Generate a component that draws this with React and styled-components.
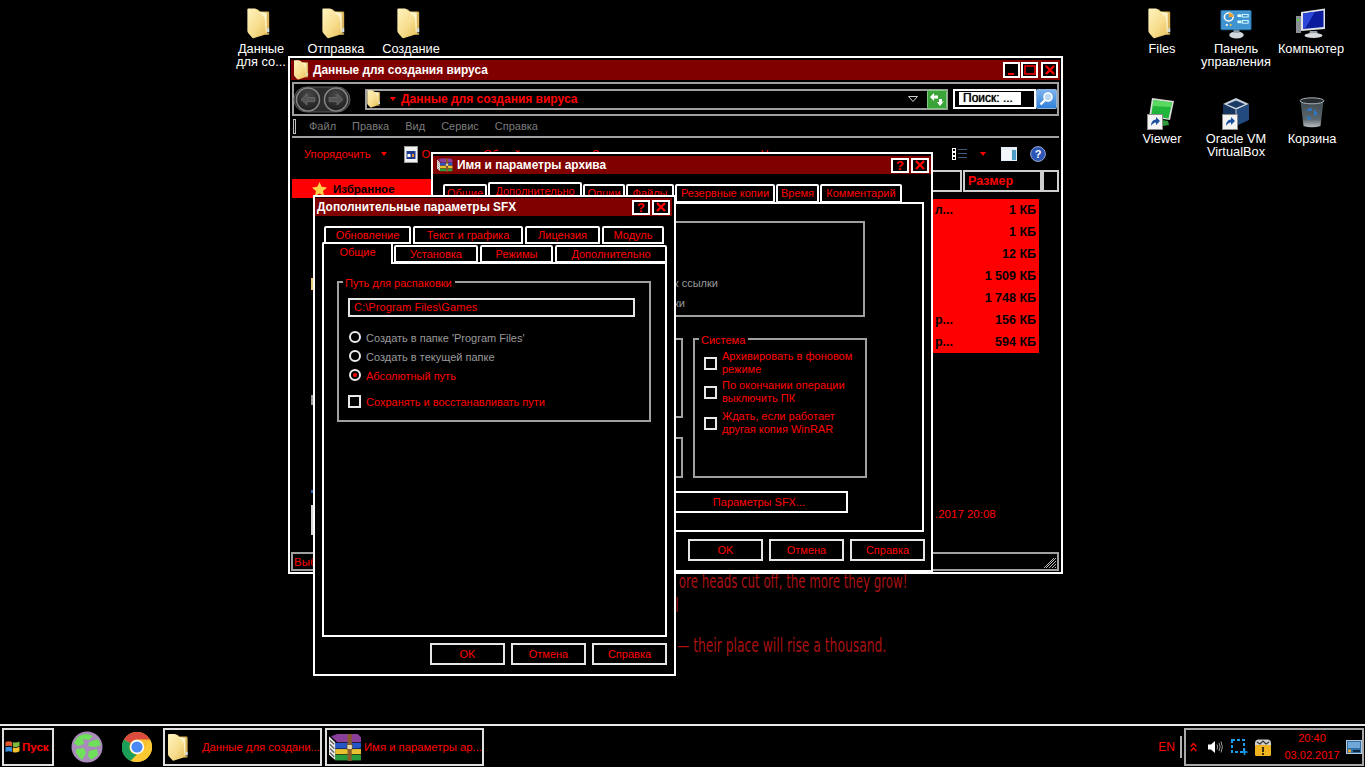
import React, { useId } from "react";
import styled, { createGlobalStyle } from "styled-components";

const Global = createGlobalStyle`
  html, body { margin: 0; padding: 0; background: #000; overflow: hidden; }
  * { box-sizing: border-box; }
  #root { width: 1365px; height: 767px; }
`;

const UI = `"Liberation Sans", Arial, sans-serif`;
const RED = "#ff0000";
const LINE = "#a0a0a0";

const Screen = styled.div`
  width: 1365px; height: 767px; background: #000; display: flex; flex-direction: column;
  font-family: ${UI}; font-size: 11px; color: ${RED}; overflow: hidden;
`;
const Desktop = styled.main`position: relative; flex: 1;`;

/* wallpaper */
const WallText = styled.div`
  position: absolute; right: ${p => p.$right}px; top: ${p => p.$top}px; white-space: nowrap;
  font-family: "DejaVu Sans", sans-serif; font-size: 20px; color: #a81212;
  transform: scaleX(${p => p.$sx}); transform-origin: right center;
`;

/* desktop icons */
const Shortcut = styled.button`
  position: absolute; left: ${p => p.$x}px; top: ${p => p.$y}px; width: 76px; padding: 0; border: 0; background: none;
  display: flex; flex-direction: column; align-items: center; font-family: ${UI};
`;
const IconSlot = styled.div`height: 33px; padding-right: ${p => p.$pr || 0}px; display: flex; align-items: flex-start; justify-content: center;`;
const ShortcutLabel = styled.span`
  margin-top: ${p => p.$gap || 0}px; color: #fff; font-size: 12.8px; line-height: 13px; text-align: center; white-space: pre-line;
`;

/* windows */
const Win = styled.section`
  position: absolute; left: ${p => p.$x}px; top: ${p => p.$y}px; width: ${p => p.$w}px; height: ${p => p.$h}px; isolation: isolate;
  border: 2px solid #fff; background: #000; display: flex; flex-direction: column; padding: ${p => p.$pad};
`;
const TitleBar = styled.header`
  flex: none; height: ${p => p.$h}px; background: #800000; display: flex; align-items: center;
  margin-right: ${p => p.$mr || 0}px; padding: 0 ${p => p.$pr || 2}px 0 ${p => p.$pl || 2}px;
`;
const TitleText = styled.span`
  flex: 1; color: #fff; font-weight: 700; font-size: 11.9px; white-space: nowrap; margin-left: ${p => p.$ml || 0}px;
`;
const CapBtn = styled.span`
  flex: none; width: ${p => p.$w || 18}px; height: ${p => p.$h || 16}px; margin-left: ${p => p.$ml ?? 2}px; border: 2px solid #fff; background: #000; color: ${RED};
  display: flex; align-items: center; justify-content: center; font-weight: 700; font-size: 13px; line-height: 1;
`;

/* explorer */
const AddressBar = styled.div`
  flex: none; height: 34px; margin: 2px 1px 0; border: 2px solid ${LINE}; display: flex; align-items: center;
`;
const NavSlot = styled.span`display: flex; flex: none; margin-left: -1px;`;
const AddressBox = styled.div`
  width: 583px; height: 21px; margin-left: 14px; border: 2px solid ${LINE}; border-right-width: 1px; display: flex; align-items: center;
`;
const Crumb = styled.span`color: ${RED}; font-weight: 700; font-size: 12px; margin-left: 5px; flex: 1; white-space: nowrap;`;
const SearchBox = styled.div`
  width: 83px; height: 20px; margin-left: 5px; border: 2px solid #fff; padding: 1px 0 1px 4px; display: flex;
`;
const SearchHint = styled.span`
  width: 62px; height: 13px; background: #fff; color: #000; font-size: 12px; line-height: 13px; padding-left: 4px; white-space: nowrap; text-shadow: 0 0 1px #000;
`;
const MenuBar = styled.nav`
  flex: none; height: 22px; margin: 0 1px; border-bottom: 2px solid ${LINE}; display: flex; align-items: center; gap: 16px;
`;
const Grip = styled.span`width: 3px; height: 15px; margin-right: -3px; margin-left: 1px; border: 1px solid #c0c0c0;`;
const MenuItem = styled.span`color: #7c7c7c; font-size: 11px; &:first-of-type { margin-left: 12px; }`;
const Toolbar = styled.div`flex: none; height: 32px; display: flex; align-items: center; padding-left: 13px; white-space: nowrap;`;
const ToolText = styled.span`color: ${RED}; font-size: 11.2px; margin-left: ${p => p.$ml || 0}px; width: ${p => p.$w ? p.$w + "px" : "auto"};`;
const Caret = styled.i`
  display: block; flex: none; width: 0; height: 0; margin-left: ${p => p.$ml || 0}px; border: 3.5px solid transparent; border-top: 4px solid ${RED}; border-bottom: 0;
`;
const ToolIcon = styled.span`display: flex; flex: none; margin-left: ${p => p.$ml || 0}px;`;
const Body = styled.div`flex: 1; display: flex; min-height: 0;`;
const Sidebar = styled.aside`width: 140px; flex: none; padding: 9px 0 0 1px; position: relative;`;
const FavRow = styled.div`
  height: 19px; background: ${RED}; color: #000; font-weight: 700; font-size: 11.5px; display: flex; align-items: center; padding-left: 20px; gap: 6px;
`;
const Sliver = styled.i`
  position: absolute; left: ${p => p.$x}px; top: ${p => p.$y}px; width: 3px; height: ${p => p.$h}px; background: ${p => p.$c};
`;
const FileMain = styled.div`flex: 1; display: flex; flex-direction: column; padding-right: 1px; min-width: 0;`;
const HeaderRow = styled.div`flex: none; height: 22px; display: flex; gap: 1px;`;
const HeadCell = styled.div`
  flex: ${p => p.$w ? "none" : 1}; width: ${p => p.$w ? p.$w + "px" : "auto"}; border: 2px solid #cfcfcf; color: ${RED}; font-weight: 700; font-size: 12.5px;
  display: flex; align-items: center; padding-left: 3px; margin-left: ${p => p.$ml || 0}px;
`;
const RowsBlock = styled.div`margin-top: 7px; width: 608px; height: 154px; background: ${RED};`;
const FileRow = styled.div`
  height: 22px; display: flex; align-items: center; color: #000; font-weight: 700; font-size: 12.5px; white-space: nowrap;
`;
const FileName = styled.span`flex: 1; text-align: right; padding-right: 14px;`;
const FileSize = styled.span`width: 72px; text-align: right; padding-right: 3px; flex: none;`;
const DateText = styled.div`margin: 154px 0 0 504px; color: ${RED}; font-size: 11.5px; line-height: 14px;`;
const StatusBar = styled.footer`
  flex: none; height: 19px; margin-right: 1px; border: 2px solid ${LINE}; color: ${RED}; font-size: 11.5px; display: flex; align-items: center; justify-content: space-between; padding-left: 1px;
`;

/* dialogs */
const TabRow = styled.div`
  flex: none; display: flex; align-items: flex-end; gap: ${p => p.$gap ?? 1}px; height: ${p => p.$h}px; margin: ${p => p.$m}; position: relative; z-index: ${p => p.$z || 0};
`;
const Tab = styled.div`
  flex: none; width: ${p => p.$w}px; height: ${p => p.$h || 19}px; border: 2px solid #fff; border-bottom: ${p => p.$active ? "0" : "2px solid #fff"}; border-radius: 2px 2px 0 0;
  background: #000; color: ${RED}; font-size: 11px; line-height: ${p => p.$active ? 16 : 15}px; text-align: center; white-space: nowrap; overflow: hidden;
  margin-right: ${p => p.$mr || 0}px; margin-bottom: ${p => p.$active ? -1 : 0}px; position: relative; z-index: ${p => p.$active ? 2 : 0};
`;
const TabPanel = styled.div`
  flex: none; width: ${p => p.$w}px; height: ${p => p.$h}px; margin: ${p => p.$m}; border: 2px solid #fff; background: #000; padding: ${p => p.$pad};
  display: flex; flex-direction: column; align-items: flex-start;
`;
const Group = styled.div`
  position: relative; flex: none; width: ${p => p.$w}px; height: ${p => p.$h}px; margin-top: ${p => p.$mt || 0}px; border: 2px solid ${LINE}; padding: ${p => p.$pad || 0};
`;
const Legend = styled.span`
  position: absolute; left: 4px; top: -6px; background: #000; padding: 0 3px 0 2px; font-size: 11px; line-height: 13px; color: ${RED}; white-space: nowrap;
`;
const GreyLine = styled.div`
  width: ${p => p.$w}px; margin-top: ${p => p.$mt}px; height: 13px; line-height: 13px; text-align: right; color: #9a9a9a; font-size: 11px; white-space: nowrap; overflow: hidden; direction: rtl;
`;
const GroupsRow = styled.div`display: flex; margin-top: 21px; gap: 10px; align-items: flex-start;`;
const GroupsCol = styled.div`display: flex; flex-direction: column; gap: 19px;`;
const CheckBox = styled.i`display: block; flex: none; width: 13px; height: 13px; border: 2px solid #e8e8e8; background: #000;`;
const WrapCheck = styled.label`
  display: flex; align-items: center; gap: 5px; margin-top: ${p => p.$mt || 0}px; font-size: 11px; line-height: 13px; color: ${RED};
`;
const WideButton = styled.div`
  align-self: flex-end; width: 176px; height: 22px; margin: 13px 74px 0 0; border: 2px solid #fff; display: flex; align-items: center; justify-content: center; font-size: 11px; color: ${RED}; padding-right: 2px; white-space: nowrap;
`;
const ButtonRow = styled.div`
  flex: none; display: flex; justify-content: flex-end; gap: ${p => p.$gap}px; margin: ${p => p.$m}; 
`;
const DlgButton = styled.div`
  width: 75px; height: 22px; border: 2px solid #e6e6e6; color: ${RED}; font-size: 11px; display: flex; align-items: center; justify-content: center;
`;
const PathInput = styled.div`
  width: 287px; height: 19px; border: 2px solid #e6e6e6; color: ${RED}; font-size: 11px; line-height: 15px; padding-left: 4px; letter-spacing: 0.1px;
`;
const RadioRow = styled.label`
  height: 19px; display: flex; align-items: center; gap: 5px; padding-left: 1px; font-size: 11px; color: ${p => p.$on ? RED : "#9a9a9a"}; margin-top: ${p => p.$mt || 0}px; white-space: nowrap;
`;
const Radio = styled.i`
  display: flex; align-items: center; justify-content: center; flex: none; width: 12px; height: 12px; margin-top: -2px; border-radius: 50%; border: 2px solid #ececec; background: #000;
  &::after { content: ""; width: 4px; height: 4px; border-radius: 50%; background: ${p => p.$on ? RED : "transparent"}; }
`;
const CheckRow = styled.label`
  height: 19px; display: flex; align-items: center; gap: 5px; margin-top: ${p => p.$mt || 0}px; font-size: 11px; color: ${RED}; white-space: nowrap;
`;

/* taskbar */
const Taskbar = styled.footer`
  flex: none; height: 43px; border-top: 2px solid #e8e8e8; display: flex; align-items: center; padding: 1px 1px 0 2px;
`;
const TaskBtn = styled.div`
  flex: none; width: ${p => p.$w}px; height: 38px; margin-left: ${p => p.$ml || 0}px; border: 2px solid #e0e0e0; display: flex; align-items: center; padding-left: ${p => p.$pl || 0}px; gap: ${p => p.$gap || 0}px;
  color: ${RED}; font-size: ${p => p.$size || 11.3}px; font-weight: ${p => p.$bold ? 700 : 400}; white-space: nowrap; overflow: hidden;
`;
const QuickIcon = styled.span`display: flex; flex: none; margin-left: ${p => p.$ml}px;`;
const Lang = styled.span`margin-left: auto; font-size: 12px; color: ${RED};`;
const LangSep = styled.i`display: block; width: 2px; height: 22px; margin: 0 2px 0 5px; background: #b0b0b0;`;
const Tray = styled.div`
  flex: none; width: 180px; height: 38px; border: 2px solid #a8a8a8; display: flex; align-items: center;
`;
const TrayIcon = styled.span`display: flex; flex: none; margin-left: ${p => p.$ml}px;`;
const Clock = styled.div`
  flex: none; width: 66px; margin-left: ${p => p.$ml}px; text-align: center; color: ${RED}; font-size: 11px; line-height: 17px;
`;

/* ---------- drawings ---------- */
const useGid = () => useId().replace(/[^a-zA-Z0-9]/g, "");

const Folder = ({ w = 24, h = 31 }) => {
  const id = useGid();
  return (
    <svg width={w} height={h} viewBox="0 0 24 32">
      <defs>
        <linearGradient id={id} x1="0" y1="0" x2="1" y2="1">
          <stop offset="0" stopColor="#fff4c0" />
          <stop offset="0.55" stopColor="#f7dc8c" />
          <stop offset="1" stopColor="#e4b94f" />
        </linearGradient>
      </defs>
      <path d="M5 1.5 H11 L13 3.5 H21 Q22.5 3.5 22.5 5 V25 L5 27 Z" fill="#d9b45a" />
      <path d="M8 3 L20 5 V26 L8 27 Z" fill="#fdf3c8" />
      <path d="M1 0.5 L8 0.5 Q10 1 12 4 L17 9 Q18 10 18.2 12 L19 24.5 Q19 26 21 26 L22.5 26 Q23 27.5 21.5 27.5 L18 27.6 L7 31 Q5.5 31.5 4.8 30.4 L1 26 Q0 25 0 23.5 V1.5 Q0 0.5 1 0.5 Z" fill={`url(#${id})`} />
      <rect x="20.5" y="21" width="2" height="4" fill="#cfe0f0" />
    </svg>
  );
};

const ControlPanel = () => (
  <svg width="33" height="29" viewBox="0 0 34 33" preserveAspectRatio="none">
    <ellipse cx="17" cy="28.5" rx="7.5" ry="4" fill="#cfd6dc" />
    <rect x="14" y="21" width="6" height="5" fill="#8d9aa6" />
    <rect x="1" y="0.5" width="31" height="22" rx="1" fill="#4d9ed8" stroke="#1f6ea8" />
    <rect x="2.5" y="2" width="28" height="19" fill="#3f93d0" />
    <circle cx="9" cy="8" r="4.5" fill="none" stroke="#fff" strokeWidth="1.6" />
    <path d="M9 8 V3 A5 5 0 0 1 14 8 Z" fill="#f0a030" />
    <circle cx="7" cy="17" r="1.2" fill="#fff" />
    <circle cx="11" cy="17" r="1.2" fill="#f0c040" />
    <rect x="18" y="5" width="4" height="3" fill="#dff" /><rect x="23" y="5" width="6" height="3" fill="none" stroke="#dff" />
    <rect x="18" y="12" width="4" height="3" fill="#dff" /><rect x="23" y="12" width="6" height="3" fill="none" stroke="#dff" />
  </svg>
);

const Computer = () => (
  <svg width="32" height="31" viewBox="0 0 32 31">
    <rect x="1" y="8" width="5" height="17" fill="#8a8f94" />
    <rect x="2" y="11" width="2" height="2" fill="#52d83c" />
    <path d="M6 4 L30 0.5 V21 L6 23 Z" fill="#dfe3e6" />
    <path d="M8 5.5 L28.5 2.5 V19 L8 21 Z" fill="#0a1c9c" />
    <path d="M8 5.5 L20 3.8 L10 20.8 L8 21 Z" fill="#2c47d8" />
    <path d="M15 23 H22 L23 26 H14 Z" fill="#9aa0a4" />
    <ellipse cx="18.5" cy="27.5" rx="9" ry="2.6" fill="#d8dcdf" />
  </svg>
);

const ArrowBadge = () => (
  <g>
    <rect x="0.5" y="0.5" width="15" height="15" fill="#f4f4f4" stroke="#8a8a8a" />
    <path d="M4 12 Q4 6 9 5.5 V3 L13 7 L9 11 V8.5 Q6 8.5 4 12 Z" fill="#1d4f9e" />
  </g>
);

const Viewer = () => (
  <svg width="30" height="33" viewBox="0 0 30 33">
    <path d="M5 1 L27 4 L23 23 L2 20 Z" fill="#d8dcd8" />
    <path d="M6.5 3 L25 5.5 L21.5 21.5 L4 19 Z" fill="#20b63c" />
    <path d="M6.5 3 L25 5.5 L24 10 L5.3 9 Z" fill="#5ad860" />
    <path d="M15 23 L21 24 L22 28 L16 29 Z" fill="#2e9b3a" />
    <g transform="translate(0,17)"><ArrowBadge /></g>
  </svg>
);

const VBox = () => (
  <svg width="29" height="33" viewBox="0 0 29 33">
    <path d="M14 1 L27 7 L14 13 L1 7 Z" fill="#c8d2de" />
    <path d="M14 3.5 L23 7.3 L14 11 L5 7.3 Z" fill="#1c3a66" />
    <path d="M1 7 L14 13 V29 L1 23 Z" fill="#17345e" />
    <path d="M27 7 L14 13 V29 L27 23 Z" fill="#234a7e" />
    <path d="M14 13 V29" stroke="#b8c4d2" />
    <g transform="translate(0,17)"><ArrowBadge /></g>
  </svg>
);

const Bin = () => {
  const id = useGid();
  return (
    <svg width="26" height="31" viewBox="0 0 26 31">
      <defs>
        <linearGradient id={id} x1="0" y1="0" x2="0" y2="1">
          <stop offset="0" stopColor="#3f4a50" /><stop offset="0.7" stopColor="#5d686e" /><stop offset="1" stopColor="#b8c0c4" />
        </linearGradient>
      </defs>
      <path d="M1.5 4 H24.5 L21.5 29 Q13 31.5 4.5 29 Z" fill={`url(#${id})`} />
      <ellipse cx="13" cy="3.8" rx="12" ry="3" fill="#262b2f" stroke="#a9b2b7" />
      <path d="M7 14 L12 10 L13 14 Z M15 12 L19 17 L15 19 Z M8 18 L13 22 L9 23 Z" fill="#2e78c8" />
    </svg>
  );
};

const NavOrbs = () => {
  const id = useGid();
  return (
    <svg width="58" height="27" viewBox="0 0 58 27">
      <defs>
        <radialGradient id={id} cx="0.5" cy="0.3" r="0.8">
          <stop offset="0" stopColor="#4a4a4a" /><stop offset="1" stopColor="#161616" />
        </radialGradient>
      </defs>
      <rect x="1" y="1" width="56" height="25" rx="12.5" fill="#2b2b2b" stroke="#5a5a5a" />
      <circle cx="15" cy="13.5" r="11.5" fill={`url(#${id})`} stroke="#858585" strokeWidth="1.5" />
      <circle cx="43" cy="13.5" r="11.5" fill={`url(#${id})`} stroke="#858585" strokeWidth="1.5" />
      <path d="M8 13.5 L14 8 V11.5 H22 V15.5 H14 V19 Z" fill="#555" stroke="#777" strokeWidth="0.6" />
      <path d="M50 13.5 L44 8 V11.5 H36 V15.5 H44 V19 Z" fill="#555" stroke="#777" strokeWidth="0.6" />
    </svg>
  );
};

const Refresh = () => (
  <svg width="20" height="19" viewBox="0 0 20 19">
    <rect x="0.5" y="0.5" width="19" height="18" rx="1" fill="#3aa33a" stroke="#7fcc7f" />
    <path d="M3 7 L7 3 V5.5 H11 V8.5 H7 V11 Z" fill="#fff" />
    <path d="M17 11 L13 16 L10 12 H12 V9 H15 V12 Z" fill="#fff" />
  </svg>
);

const SearchBtn = () => (
  <svg width="21" height="20" viewBox="0 0 21 20">
    <defs>
      <linearGradient id="srch" x1="0" y1="0" x2="0" y2="1"><stop offset="0" stopColor="#7fb4ee" /><stop offset="1" stopColor="#2f7fd8" /></linearGradient>
    </defs>
    <rect x="0.5" y="0.5" width="20" height="19" rx="1" fill="url(#srch)" stroke="#8fb4dc" />
    <circle cx="12" cy="8" r="4" fill="#bcd8f5" stroke="#fff" strokeWidth="1.6" />
    <path d="M9 11 L4.5 15.5" stroke="#fff" strokeWidth="2.4" />
  </svg>
);

const DocIcon = () => (
  <svg width="14" height="17" viewBox="0 0 14 17">
    <rect x="0.5" y="0.5" width="13" height="16" fill="#f2f2f2" stroke="#9a9a9a" />
    <rect x="2.5" y="5" width="9" height="8" fill="#1b3a8c" />
    <rect x="3.5" y="8" width="3" height="3" fill="#fff" /><rect x="8" y="8" width="2" height="3" fill="#e83" />
  </svg>
);

const ViewIcon = () => (
  <svg width="15" height="12" viewBox="0 0 15 12">
    {[0, 4, 8].map(y => (
      <g key={y}>
        <rect x="0.5" y={y + 0.5} width="3" height="3" fill="#000" stroke="#fff" />
        <rect x="6" y={y + 1} width="9" height="1" fill="#3e5a78" />
      </g>
    ))}
  </svg>
);

const PaneIcon = () => (
  <svg width="16" height="14" viewBox="0 0 16 14">
    <rect width="16" height="14" fill="#e4eef6" />
    <rect x="1" y="3" width="9" height="10" fill="#f4f8fc" />
    <rect x="11" y="3" width="4" height="10" fill="#4d9cc8" />
  </svg>
);

const HelpIcon = () => (
  <svg width="16" height="16" viewBox="0 0 16 16">
    <circle cx="8" cy="8" r="7.4" fill="#2c55b8" stroke="#9aa8c8" />
    <text x="8" y="12" textAnchor="middle" fill="#fff" fontFamily="Liberation Sans" fontWeight="700" fontSize="11">?</text>
  </svg>
);

const Star = () => (
  <svg width="15" height="14" viewBox="0 0 15 14">
    <path d="M7.5 0 L9.7 4.8 L15 5.4 L11 9 L12.2 14 L7.5 11.4 L2.8 14 L4 9 L0 5.4 L5.3 4.8 Z" fill="#ffd24a" />
  </svg>
);

const RarIcon = ({ s = 16 }) => (
  <svg width={s} height={s} viewBox="0 0 32 26">
    <path d="M2 2 L8 0 H28 L31 3 V8 H8 Z" fill="#8a3f9a" />
    <rect x="6" y="8.5" width="25" height="5.5" fill="#2456c8" />
    <rect x="6" y="14.5" width="25" height="5" fill="#e8c030" />
    <rect x="6" y="20" width="25" height="5.5" fill="#2a9a3a" />
    <path d="M0 2 L6 8 V25 L0 20 Z" fill="#e8e8e8" />
    <path d="M1 6 L5 10 M1 10 L5 14 M1 14 L5 18 M1 18 L5 22" stroke="#444" />
    <rect x="18" y="0" width="4" height="26" fill="#8a5a2a" />
    <rect x="17.5" y="10" width="5" height="5" fill="#e9d9a8" stroke="#5a3a1a" strokeWidth="0.6" />
  </svg>
);

const Flag = () => (
  <svg width="15" height="14" viewBox="0 0 15 14">
    <path d="M0.5 2 Q3.5 0.5 7 2 V6.5 Q3.5 5 0.5 6.5 Z" fill="#e4572e" />
    <path d="M7.8 2 Q11 3.4 14.5 1.5 V6 Q11 8 7.8 6.5 Z" fill="#7fba3c" />
    <path d="M0.5 7.3 Q3.5 6 7 7.3 V12 Q3.5 10.5 0.5 12 Z" fill="#3a8ee0" />
    <path d="M7.8 7.3 Q11 8.8 14.5 6.8 V11.2 Q11 13.4 7.8 12 Z" fill="#f4c430" />
  </svg>
);

const TorGlobe = () => (
  <svg width="32" height="32" viewBox="0 0 32 32">
    <circle cx="16" cy="16" r="15.5" fill="#a88bb8" />
    <path d="M6 7 Q10 3 16 3 L22 5 L18 9 L12 8 L13 13 L7 15 L3 12 Z" fill="#6fe05a" />
    <path d="M18 11 L27 8 L30 14 L24 16 L17 15 Z" fill="#6fe05a" />
    <path d="M5 18 L13 17 L15 22 L11 29 Q7 26 5 22 Z" fill="#6fe05a" />
    <path d="M18 20 L26 18 L27 24 L20 29 L17 25 Z" fill="#6fe05a" />
  </svg>
);

const Chrome = () => (
  <svg width="30" height="30" viewBox="0 0 30 30">
    <circle cx="15" cy="15" r="15" fill="#fbc02d" />
    <path d="M15 0 A15 15 0 0 1 28 7.5 H15 A7.5 7.5 0 0 0 8.5 11.2 L2 7.5 A15 15 0 0 1 15 0 Z" fill="#dd4b3e" />
    <path d="M2 7.5 L8.5 11.2 A7.5 7.5 0 0 0 15 22.5 L8.5 29 A15 15 0 0 1 2 7.5 Z" fill="#1b9e58" />
    <path d="M8.5 29 L15 22.5 Q19 22 21.5 18.7 L28 7.5 A15 15 0 0 1 15 30 Q11 30 8.5 29 Z" fill="#fcc934" />
    <circle cx="15" cy="15" r="7.2" fill="#fff" />
    <circle cx="15" cy="15" r="5.6" fill="#4a8af4" />
  </svg>
);

const Chevrons = () => (
  <svg width="7" height="10" viewBox="0 0 7 10">
    <path d="M0.7 4.5 L3.5 1.5 L6.3 4.5 M0.7 9 L3.5 6 L6.3 9" fill="none" stroke={RED} strokeWidth="1.4" />
  </svg>
);
const Speaker = () => (
  <svg width="15" height="14" viewBox="0 0 15 14">
    <path d="M0 4.5 H3 L7 1 V13 L3 9.5 H0 Z" fill="#fff" />
    <path d="M9 4.5 Q10.5 7 9 9.5 M11 3 Q13.3 7 11 11 M13 1.5 Q15.8 7 13 12.5" fill="none" stroke="#9a9a9a" />
  </svg>
);
const Capture = () => (
  <svg width="17" height="17" viewBox="0 0 17 17">
    <rect x="1" y="1" width="12" height="12" fill="none" stroke="#1a9cf0" strokeWidth="2" strokeDasharray="3 2" />
    <path d="M13.5 9.5 V16 M10.5 13 H16.5" stroke="#1a9cf0" strokeWidth="1.6" />
  </svg>
);
const LockIcon = () => (
  <svg width="16" height="17" viewBox="0 0 16 17">
    <path d="M0 4 Q0 1 3 0.5 H13 Q16 1 16 4 V7 H0 Z" fill="#cfcfcf" />
    <path d="M2 3 L5 5 L8 2 L11 5 L14 3" fill="none" stroke="#333" strokeWidth="1.2" />
    <rect x="0" y="6" width="16" height="11" rx="1.5" fill="#f0b420" />
    <rect x="7" y="8" width="2" height="5" fill="#40300a" /><rect x="7" y="14" width="2" height="2" fill="#40300a" />
  </svg>
);
const NetIcon = () => (
  <svg width="16" height="14" viewBox="0 0 16 14">
    <rect x="0.5" y="0.5" width="15" height="13" fill="#2f6ea5" stroke="#b8c8d8" />
    <rect x="2" y="2" width="12" height="6" fill="#6fa8d8" />
    <rect x="2" y="9.5" width="3" height="3" fill="#e8a030" />
    <rect x="7" y="10" width="7" height="2" fill="#10283f" />
  </svg>
);
const Grips = () => (
  <svg width="14" height="14" viewBox="0 0 14 14">
    <path d="M13 3 L3 13 M13 6 L6 13 M13 9 L9 13 M13 12 L12 13 M11 3 L1 13" stroke="#b8b8b8" fill="none" />
  </svg>
);

const CloseX = () => (
  <svg width="10" height="10" viewBox="0 0 10 10"><path d="M1 1 L9 9 M9 1 L1 9" stroke={RED} strokeWidth="2.4" /></svg>
);

const desktopIcons = [
  { x: 223, y: 8, pr: 4, icon: <Folder />, label: "Данные\nдля со...", gap: 1 },
  { x: 298, y: 8, pr: 4, icon: <Folder />, label: "Отправка", gap: 1 },
  { x: 373, y: 8, pr: 4, icon: <Folder />, label: "Создание", gap: 1 },
  { x: 1124, y: 8, pr: 4, icon: <Folder />, label: "Files", gap: 1 },
  { x: 1198, y: 10, icon: <ControlPanel />, label: "Панель\nуправления", gap: -1 },
  { x: 1273, y: 8, icon: <Computer />, label: "Компьютер", gap: 1 },
  { x: 1124, y: 97, icon: <Viewer />, label: "Viewer", gap: 2 },
  { x: 1198, y: 97, icon: <VBox />, label: "Oracle VM\nVirtualBox", gap: 2 },
  { x: 1274, y: 97, icon: <Bin />, label: "Корзина", gap: 2 },
];

const files = [
  ["л...", "1 КБ"], ["", "1 КБ"], ["", "12 КБ"], ["", "1 509 КБ"], ["", "1 748 КБ"], ["р...", "156 КБ"], ["р...", "594 КБ"],
];

export default function App() {
  return (
    <Screen>
      <Global />
      <Desktop>
        <WallText $right={458} $top={569} $sx={0.59}>ore heads cut off, the more they grow!</WallText>
        <WallText $right={686} $top={593} $sx={0.59}>l</WallText>
        <WallText $right={479} $top={633} $sx={0.615}>— their place will rise a thousand.</WallText>

        {desktopIcons.map(d => (
          <Shortcut key={d.label} $x={d.x} $y={d.y}>
            <IconSlot $pr={d.pr}>{d.icon}</IconSlot>
            <ShortcutLabel $gap={d.gap}>{d.label}</ShortcutLabel>
          </Shortcut>
        ))}

        <Win $x={288} $y={56} $w={775} $h={518} $pad="2px 1px 1px">
          <TitleBar $h={20} $pl={3}>
            <Folder w={15} h={20} />
            <TitleText $ml={4}>Данные для создания вируса</TitleText>
            <CapBtn $w={17}>
              <svg width="8" height="10" viewBox="0 0 8 10"><rect x="0" y="8" width="6" height="2" fill={RED} /></svg>
            </CapBtn>
            <CapBtn $w={17} $ml={1}>
              <svg width="12" height="10" viewBox="0 0 12 10"><rect x="1" y="1" width="10" height="8" fill="none" stroke={RED} strokeWidth="1.5" /></svg>
            </CapBtn>
            <CapBtn $w={17} $ml={3}><CloseX /></CapBtn>
          </TitleBar>

          <AddressBar>
            <NavSlot><NavOrbs /></NavSlot>
            <AddressBox>
              <Folder w={14} h={18} />
              <Caret $ml={9} />
              <Crumb>Данные для создания вируса</Crumb>
              <svg width="10" height="6" viewBox="0 0 10 6"><path d="M0.5 0.5 H9.5 L5 5.5 Z" fill="none" stroke="#cfcfcf" /></svg>
              <ToolIcon $ml={9}><Refresh /></ToolIcon>
            </AddressBox>
            <SearchBox><SearchHint>Поиск: ...</SearchHint></SearchBox>
            <SearchBtn />
          </AddressBar>

          <MenuBar>
            <Grip />
            <MenuItem>Файл</MenuItem>
            <MenuItem>Правка</MenuItem>
            <MenuItem>Вид</MenuItem>
            <MenuItem>Сервис</MenuItem>
            <MenuItem>Справка</MenuItem>
          </MenuBar>

          <Toolbar>
            <ToolText>Упорядочить</ToolText>
            <Caret $ml={10} />
            <ToolIcon $ml={17}><DocIcon /></ToolIcon>
            <ToolText $ml={4} $w={62}>Открыть</ToolText>
            <ToolText $w={109}>Общий доступ</ToolText>
            <ToolText $w={168}>Записать на диск</ToolText>
            <ToolText $w={191}>Новая папка</ToolText>
            <ToolIcon><ViewIcon /></ToolIcon>
            <Caret $ml={13} />
            <ToolIcon $ml={15}><PaneIcon /></ToolIcon>
            <ToolIcon $ml={13}><HelpIcon /></ToolIcon>
          </Toolbar>

          <Body>
            <Sidebar>
              <FavRow><Star />Избранное</FavRow>
              <Sliver $x={20} $y={108} $h={12} $c="#e8c878" />
              <Sliver $x={20} $y={225} $h={10} $c="#9a9a9a" />
              <Sliver $x={20} $y={320} $h={3} $c="#2a5ab0" />
              <Sliver $x={20} $y={335} $h={30} $c="#d8d8d8" />
            </Sidebar>
            <FileMain>
              <HeaderRow>
                <HeadCell />
                <HeadCell $w={79}>Размер</HeadCell>
                <HeadCell $w={17} $ml={-1} />
              </HeaderRow>
              <RowsBlock>
                {files.map(([n, s], i) => (
                  <FileRow key={i}><FileName>{n}</FileName><FileSize>{s}</FileSize></FileRow>
                ))}
              </RowsBlock>
              <DateText>.2017 20:08</DateText>
            </FileMain>
          </Body>

          <StatusBar>Выбрано<Grips /></StatusBar>
        </Win>

        <Win $x={431} $y={152} $w={502} $h={420} $pad="2px 0 0">
          <TitleBar $h={18} $pl={4} $pr={2}>
            <RarIcon s={16} />
            <TitleText $ml={4}>Имя и параметры архива</TitleText>
            <CapBtn $h={15}>?</CapBtn>
            <CapBtn $h={15}><CloseX /></CapBtn>
          </TitleBar>
          <TabRow $h={21} $m="8px 0 -1px 10px" $z={1}>
            <Tab $w={44}>Общие</Tab>
            <Tab $w={94} $h={21}>Дополнительно</Tab>
            <Tab $w={42}>Опции</Tab>
            <Tab $w={48}>Файлы</Tab>
            <Tab $w={100}>Резервные копии</Tab>
            <Tab $w={43}>Время</Tab>
            <Tab $w={82}>Комментарий</Tab>
          </TabRow>
          <TabPanel $w={486} $h={330} $m="0 0 0 5px" $pad="17px 0 0 10px">
            <Group $w={415} $h={96}>
              <GreyLine $w={266} $mt={54}>Сохранять символические ссылки как ссылки</GreyLine>
              <GreyLine $w={233} $mt={7}>Сохранять жёсткие ссылки</GreyLine>
            </Group>
            <GroupsRow>
              <GroupsCol>
                <Group $w={233} $h={80} />
                <Group $w={233} $h={41} />
              </GroupsCol>
              <Group $w={174} $h={140} $pad="10px 0 0 9px">
                <Legend>Система</Legend>
                <WrapCheck><CheckBox /><span>Архивировать в фоновом<br />режиме</span></WrapCheck>
                <WrapCheck $mt={3}><CheckBox /><span>По окончании операции<br />выключить ПК</span></WrapCheck>
                <WrapCheck $mt={5}><CheckBox /><span>Ждать, если работает<br />другая копия WinRAR</span></WrapCheck>
              </Group>
            </GroupsRow>
            <WideButton>Параметры SFX...</WideButton>
          </TabPanel>
          <ButtonRow $gap={6} $m="7px 6px 0 0">
            <DlgButton>OK</DlgButton>
            <DlgButton>Отмена</DlgButton>
            <DlgButton>Справка</DlgButton>
          </ButtonRow>
        </Win>

        <Win $x={313} $y={195} $w={363} $h={481} $pad="1px 0 0">
          <TitleBar $h={18} $mr={2} $pl={2} $pr={2}>
            <TitleText>Дополнительные параметры SFX</TitleText>
            <CapBtn $h={15}>?</CapBtn>
            <CapBtn $h={15}><CloseX /></CapBtn>
          </TitleBar>
          <TabRow $h={18} $gap={2} $m="10px 0 0 9px">
            <Tab $w={87} $h={18}>Обновление</Tab>
            <Tab $w={110} $h={18}>Текст и графика</Tab>
            <Tab $w={75} $h={18}>Лицензия</Tab>
            <Tab $w={62} $h={18}>Модуль</Tab>
          </TabRow>
          <TabRow $h={18} $gap={2} $m="1px 0 -1px 7px" $z={2}>
            <Tab $w={71} $h={22} $active $mr={-1}>Общие</Tab>
            <Tab $w={84} $h={18}>Установка</Tab>
            <Tab $w={73} $h={18}>Режимы</Tab>
            <Tab $w={112} $h={18}>Дополнительно</Tab>
          </TabRow>
          <TabPanel $w={345} $h={375} $m="0 0 0 7px" $pad="17px 0 0 13px">
            <Group $w={314} $h={141} $pad="15px 0 0 9px">
              <Legend>Путь для распаковки</Legend>
              <PathInput>C:\Program Files\Games</PathInput>
              <RadioRow $mt={11}><Radio />Создать в папке 'Program Files'</RadioRow>
              <RadioRow><Radio />Создать в текущей папке</RadioRow>
              <RadioRow $on><Radio $on />Абсолютный путь</RadioRow>
              <CheckRow $mt={7}><CheckBox />Сохранять и восстанавливать пути</CheckRow>
            </Group>
          </TabPanel>
          <ButtonRow $gap={6} $m="6px 7px 0 0">
            <DlgButton>OK</DlgButton>
            <DlgButton>Отмена</DlgButton>
            <DlgButton>Справка</DlgButton>
          </ButtonRow>
        </Win>
      </Desktop>

      <Taskbar>
        <TaskBtn $w={52} $pl={1} $gap={2} $bold $size={11.5}><Flag />Пуск</TaskBtn>
        <QuickIcon $ml={17}><TorGlobe /></QuickIcon>
        <QuickIcon $ml={19}><Chrome /></QuickIcon>
        <TaskBtn $w={159} $ml={11} $pl={3} $gap={13}><Folder w={24} h={33} />Данные для создани...</TaskBtn>
        <TaskBtn $w={159} $ml={3} $pl={2} $gap={2}><RarIcon s={33} />Имя и параметры ар...</TaskBtn>
        <Lang>EN</Lang>
        <LangSep />
        <Tray>
          <TrayIcon $ml={4}><Chevrons /></TrayIcon>
          <TrayIcon $ml={11}><Speaker /></TrayIcon>
          <TrayIcon $ml={8}><Capture /></TrayIcon>
          <TrayIcon $ml={7}><LockIcon /></TrayIcon>
          <Clock $ml={8}>20:40<br />03.02.2017</Clock>
          <TrayIcon $ml={1}><NetIcon /></TrayIcon>
        </Tray>
      </Taskbar>
    </Screen>
  );
}
